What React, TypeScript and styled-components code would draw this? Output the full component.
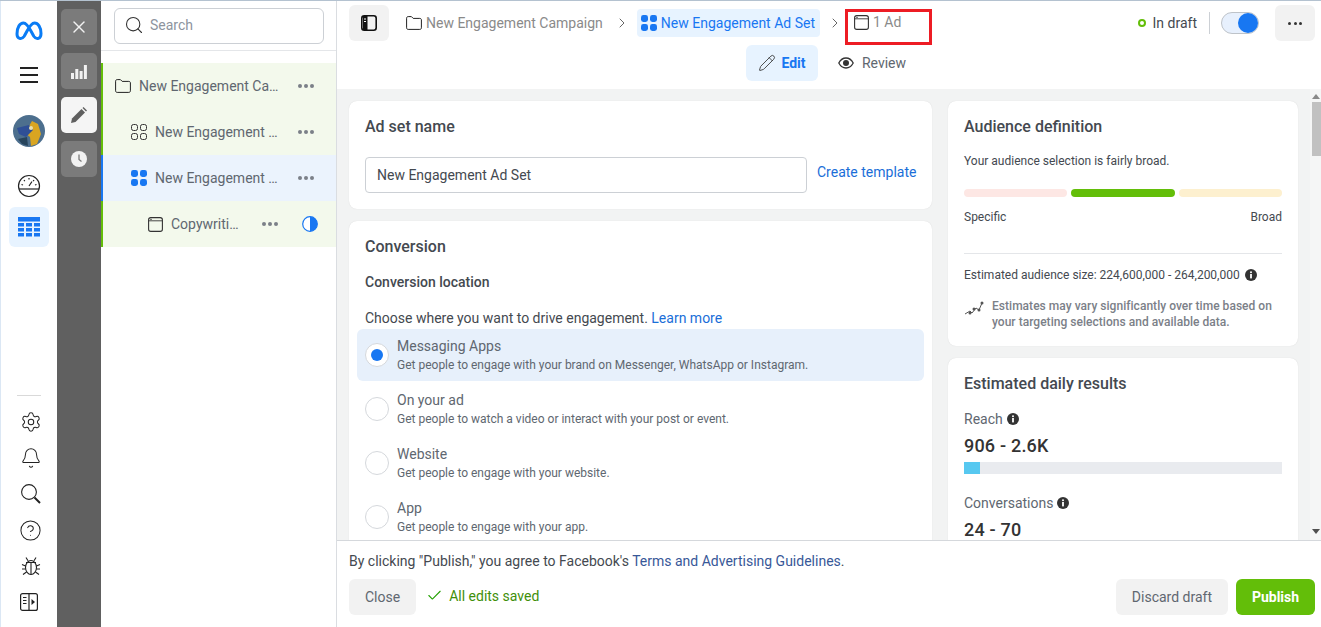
import React from 'react';
import styled, { createGlobalStyle } from 'styled-components';
import { Bell, Check, ChevronRight, CircleHelp, Pencil, Search, Settings, X } from 'lucide-react';

const GlobalStyle = createGlobalStyle`
	html, body, #root {
		height: 100%;
		margin: 0;
	}
	body {
		font-family: Roboto, "Liberation Sans", sans-serif;
		font-size: 14px;
		color: #444950;
		overflow: hidden;
		background: #fff;
	}
	* {
		box-sizing: border-box;
	}
`;

const GridIcon = ({ filled }: { filled?: boolean }) => (
	<svg width="16" height="16" viewBox="0 0 16 16">
		{[0, 9].map((y) =>
			[0, 9].map((x) =>
				filled ? (
					<rect key={`${x}-${y}`} x={x} y={y} width="7" height="7" rx="2.4" fill="#1877f2" />
				) : (
					<rect key={`${x}-${y}`} x={x + 0.5} y={y + 0.5} width="6" height="6" rx="2" fill="none" stroke="#333" />
				)
			)
		)}
	</svg>
);

const AdIcon = () => (
	<svg width="15" height="15" viewBox="0 0 15 15" fill="none">
		<rect x="0.6" y="0.6" width="13.8" height="13.8" rx="2.2" stroke="#333" strokeWidth="1.1" />
		<path d="M0.8 3.8H14.2" stroke="#333" strokeWidth="0.9" />
		<rect x="2.4" y="1.8" width="1.2" height="1.2" fill="#333" />
	</svg>
);

const FolderIcon = () => (
	<svg width="16" height="14" viewBox="0 0 16 14" fill="none">
		<path d="M0.6 2.2C0.6 1.2 1.2 0.6 2.2 0.6H5.4L7.2 2.4H13.8C14.8 2.4 15.4 3 15.4 4V11.8C15.4 12.8 14.8 13.4 13.8 13.4H2.2C1.2 13.4 0.6 12.8 0.6 11.8Z" stroke="#222" strokeWidth="1" />
	</svg>
);

const InfoIcon = () => (
	<svg width="12" height="12" viewBox="0 0 12 12">
		<circle cx="6" cy="6" r="6" fill="#333" />
		<rect x="5.1" y="5" width="1.8" height="4.4" fill="#fff" />
		<circle cx="6" cy="3.2" r="1" fill="#fff" />
	</svg>
);

const App: React.FC = () => {
	return (
		<Page>
			<GlobalStyle />
			<Rail>
				<svg width="28" height="20" viewBox="0 0 28 20" fill="none" style={{ marginTop: 20 }}>
					<path
						d="M2 13C2 6 5 2 8.500 2C13 2 16 11 19 15.500C21.500 19 26 18 26 12.500C26 6 23 2 19.500 2C15 2 12 11 9 15.500C6.500 19 2 18 2 13Z"
						stroke="#0a7cf5"
						strokeWidth="3"
					/>
				</svg>
				<Burger>
					<span />
					<span />
					<span />
				</Burger>
				<svg width="32" height="32" viewBox="0 0 32 32" style={{ marginTop: 32 }}>
					<circle cx="16" cy="16" r="16" fill="#4d6f8e" />
					<path d="M19 6L25 9L28 19L24 29L18 31L17 22L12 18Z" fill="#d9a521" />
					<path d="M4 13L16 10L20 15L13 22L6 19Z" fill="#2f4f96" />
					<path d="M5 24L14 22L15 31L9 29Z" fill="#27445c" />
					<circle cx="18" cy="13" r="2" fill="#e9dfb0" />
				</svg>
				<svg width="24" height="24" viewBox="0 0 24 24" fill="none" style={{ marginTop: 27 }}>
					<circle cx="12" cy="12" r="10.500" stroke="#222" strokeWidth="1.2" />
					<path d="M2 15H22" stroke="#222" strokeWidth="1.2" />
					<path d="M12 12L15 7.500" stroke="#222" strokeWidth="1.2" />
					<path d="M12 4V5.500M7 6L7.800 7.200M17 6L16.200 7.200M4.500 10.500L6 11M19.500 10.500L18 11" stroke="#222" strokeWidth="1.2" />
				</svg>
				<RailActive>
					<svg width="22" height="20" viewBox="0 0 22 20">
						<rect width="22" height="4.500" fill="#1877f2" />
						{[6, 11, 16].map((y) =>
							[0, 8, 16].map((x) => <rect key={`${x}-${y}`} x={x} y={y} width="6" height="3.500" fill="#1877f2" />)
						)}
					</svg>
				</RailActive>
				<RailSpacer />
				<RailRule />
				<RailIcon><Settings size={22} strokeWidth={1.1} /></RailIcon>
				<RailIcon><Bell size={22} strokeWidth={1.1} /></RailIcon>
				<RailIcon>
					<svg width="20" height="20" viewBox="0 0 20 20" fill="none">
						<circle cx="8" cy="8" r="7.400" stroke="#222" strokeWidth="1.100" />
						<path d="M13.500 13.500L19 19" stroke="#222" strokeWidth="2" />
					</svg>
				</RailIcon>
				<RailIcon><CircleHelp size={23} strokeWidth={1.05} /></RailIcon>
				<RailIcon>
					<svg width="20" height="20" viewBox="0 0 20 20" fill="none" stroke="#222" strokeWidth="1.100">
						<ellipse cx="10" cy="11.500" rx="5.500" ry="7" />
						<path d="M10 6V18.500M5 6.500H15" />
						<path d="M7 4.800L5 1.500M13 4.800L15 1.500M4.500 10L1 8.500M15.500 10L19 8.500M4.500 13H1M15.500 13H19M5.500 16L2 18.500M14.500 16L18 18.500" />
					</svg>
				</RailIcon>
				<RailIcon $flush>
					<svg width="18" height="18" viewBox="0 0 18 18" fill="none">
						<rect x="0.6" y="0.6" width="16.800" height="16.800" rx="2" stroke="#222" strokeWidth="1.2" />
						<path d="M9 1V17" stroke="#222" strokeWidth="1.2" />
						<path d="M3 4.500H6.500M3 7.500H6.500M3 10.500H6.500" stroke="#222" />
						<path d="M11.500 6L15 9L11.500 12Z" fill="#222" />
					</svg>
				</RailIcon>
			</Rail>
			<Strip>
				<StripButton><X size={20} color="#f2f2f2" strokeWidth={1.7} /></StripButton>
				<StripButton>
					<svg width="16" height="15" viewBox="0 0 16 15" fill="#f2f2f2">
						<rect y="9" width="3" height="6" />
						<rect x="4.300" y="5" width="3" height="10" />
						<rect x="8.600" y="7" width="3" height="8" />
						<rect x="12.900" y="1" width="3" height="14" />
					</svg>
				</StripButton>
				<StripButton $active>
					<svg width="16" height="16" viewBox="0 0 16 16" fill="#5f5f5f">
						<path d="M0 16L1 11.500L10.500 2L14 5.500L4.500 15Z" />
						<path d="M11.500 1L12.500 0L16 3.500L15 4.500Z" />
					</svg>
				</StripButton>
				<StripButton>
					<svg width="16" height="16" viewBox="0 0 16 16">
						<circle cx="8" cy="8" r="8" fill="#f2f2f2" />
						<path d="M8 3.500V8.500L10.500 10.500" stroke="#7a7a7a" strokeWidth="1.300" fill="none" />
					</svg>
				</StripButton>
			</Strip>
			<Tree>
				<TreeSearch>
					<SearchBox>
						<Search size={20} color="#333" strokeWidth={1.3} />
						<span>Search</span>
					</SearchBox>
				</TreeSearch>
				<TreeRows>
					<TreeRow $indent={14}>
						<FolderIcon />
						<TreeLabel>New Engagement Campaign</TreeLabel>
						<Dots />
					</TreeRow>
					<TreeRow $indent={30}>
						<GridIcon />
						<TreeLabel>New Engagement Ad Set</TreeLabel>
						<Dots />
					</TreeRow>
					<TreeRow $indent={30} $selected>
						<GridIcon filled />
						<TreeLabel>New Engagement Ad Set</TreeLabel>
						<Dots />
					</TreeRow>
					<TreeRow $indent={47}>
						<AdIcon />
						<TreeLabel $short>Copywriting Ad</TreeLabel>
						<Dots />
						<svg width="16" height="16" viewBox="0 0 16 16" style={{ marginLeft: 16, marginRight: -4 }}>
							<circle cx="8" cy="8" r="7.300" fill="#fff" stroke="#1877f2" strokeWidth="1.200" />
							<path d="M8 0.700A7.300 7.300 0 0 1 8 15.300Z" fill="#1877f2" />
						</svg>
					</TreeRow>
				</TreeRows>
			</Tree>
			<Main>
				<TopBar>
					<CrumbRow>
						<SquareButton>
							<svg width="16" height="16" viewBox="0 0 16 16" fill="none">
								<rect x="0.800" y="0.800" width="14.400" height="14.400" rx="2.500" stroke="#111" strokeWidth="1.600" />
								<path d="M2 1H6.500V15H2Z" fill="#111" />
								<path d="M3 4H5M3 6.500H5" stroke="#fff" />
							</svg>
						</SquareButton>
						<Crumb>
							<FolderIcon />
							New Engagement Campaign
						</Crumb>
						<ChevronRight size={16} color="#666" strokeWidth={1.5} />
						<CrumbActive>
							<GridIcon filled />
							New Engagement Ad Set
						</CrumbActive>
						<ChevronRight size={16} color="#666" strokeWidth={1.5} />
						<MarkedCrumb>
							<AdIcon />
							1 Ad
						</MarkedCrumb>
						<Status>
							<StatusDot />
							In draft
							<StatusRule />
							<Toggle><span /></Toggle>
							<SquareButton>
								<Dots $dark />
							</SquareButton>
						</Status>
					</CrumbRow>
					<Tabs>
						<EditTab>
							<Pencil size={18} strokeWidth={1.15} color="#333" />
							Edit
						</EditTab>
						<ReviewTab>
							<svg width="16" height="12" viewBox="0 0 16 12" fill="none">
								<path d="M0.800 6C2.500 2.800 5 1 8 1C11 1 13.500 2.800 15.200 6C13.500 9.200 11 11 8 11C5 11 2.500 9.200 0.800 6Z" stroke="#333" strokeWidth="1.300" />
								<circle cx="8" cy="6" r="3" fill="#333" />
							</svg>
							Review
						</ReviewTab>
					</Tabs>
				</TopBar>
				<Body>
					<Columns>
						<LeftColumn>
							<Card>
								<CardTitle>Ad set name</CardTitle>
								<NameRow>
									<NameInput>New Engagement Ad Set</NameInput>
									<CreateLink>Create template</CreateLink>
								</NameRow>
							</Card>
							<Card>
								<CardTitle>Conversion</CardTitle>
								<SubTitle>Conversion location</SubTitle>
								<Lead>
									Choose where you want to drive engagement. <BlueLink>Learn more</BlueLink>
								</Lead>
								{options.map((option, index) => (
									<Option key={option.title} $selected={index === 0}>
										<Radio $selected={index === 0} />
										<div>
											<OptionTitle>{option.title}</OptionTitle>
											<OptionText>{option.text}</OptionText>
										</div>
									</Option>
								))}
							</Card>
						</LeftColumn>
						<RightColumn>
							<Card>
								<CardTitle>Audience definition</CardTitle>
								<SmallText>Your audience selection is fairly broad.</SmallText>
								<Meter>
									<MeterPart $color="#fde7e4" />
									<MeterPart $color="#63be09" />
									<MeterPart $color="#fdf0cf" />
								</Meter>
								<MeterLabels>
									<span>Specific</span>
									<span>Broad</span>
								</MeterLabels>
								<Divider />
								<SizeLine>
									Estimated audience size: 224,600,000 - 264,200,000 <InfoIcon />
								</SizeLine>
								<Note>
									<svg width="20" height="16" viewBox="0 0 20 16" fill="none">
										<path d="M1 13L6 10L8 12L12 7L15 9L18 2" stroke="#555" strokeWidth="1" />
										<circle cx="6" cy="12" r="1.500" fill="#555" />
										<circle cx="10" cy="8" r="1.500" fill="#555" />
										<circle cx="15" cy="9" r="1.500" fill="#555" />
										<circle cx="18" cy="2" r="1.500" fill="#555" />
									</svg>
									<span>Estimates may vary significantly over time based on your targeting selections and available data.</span>
								</Note>
							</Card>
							<Card>
								<CardTitle>Estimated daily results</CardTitle>
								<ResultLabel>Reach <InfoIcon /></ResultLabel>
								<ResultValue>906 - 2.6K</ResultValue>
								<ResultBar><span style={{ width: '5%' }} /></ResultBar>
								<ResultLabel>Conversations <InfoIcon /></ResultLabel>
								<ResultValue>24 - 70</ResultValue>
								<ResultBar><span style={{ width: '5%' }} /></ResultBar>
							</Card>
						</RightColumn>
					</Columns>
					<Scrollbar>
						<ArrowUp />
						<Thumb />
						<ArrowDown />
					</Scrollbar>
				</Body>
				<Footer>
					<Terms>
						By clicking "Publish," you agree to Facebook's <TermsLink>Terms and Advertising Guidelines</TermsLink>.
					</Terms>
					<FooterRow>
						<GreyButton>Close</GreyButton>
						<Saved>
							<Check size={17} color="#22a000" strokeWidth={1.500} />
							All edits saved
						</Saved>
						<FooterSpacer />
						<GreyButton>Discard draft</GreyButton>
						<PublishButton>Publish</PublishButton>
					</FooterRow>
				</Footer>
			</Main>
		</Page>
	);
};

const options = [
	{ title: 'Messaging Apps', text: 'Get people to engage with your brand on Messenger, WhatsApp or Instagram.' },
	{ title: 'On your ad', text: 'Get people to watch a video or interact with your post or event.' },
	{ title: 'Website', text: 'Get people to engage with your website.' },
	{ title: 'App', text: 'Get people to engage with your app.' },
];

const Dots = ({ $dark }: { $dark?: boolean }) => (
	<DotsWrap $dark={$dark}>
		<i />
		<i />
		<i />
	</DotsWrap>
);

const DotsWrap = styled.span<{ $dark?: boolean }>`
	display: inline-flex;
	gap: ${(p) => (p.$dark ? '2.5px' : '2px')};
	flex-shrink: 0;
	i {
		width: ${(p) => (p.$dark ? '3px' : '4px')};
		height: ${(p) => (p.$dark ? '3px' : '4px')};
		border-radius: 50%;
		background: ${(p) => (p.$dark ? '#333' : '#7b8088')};
	}
`;

const Page = styled.div`
	display: flex;
	height: 100vh;
	overflow: hidden;
	border-top: 1px solid #b4c2d0;
`;

const Rail = styled.nav`
	width: 57px;
	flex-shrink: 0;
	display: flex;
	flex-direction: column;
	align-items: center;
	border-left: 1px solid #dbe7f4;
	padding-bottom: 7px;
`;

const Burger = styled.div`
	display: flex;
	flex-direction: column;
	gap: 5px;
	margin-top: 26px;
	span {
		width: 18px;
		height: 2px;
		background: #222;
	}
`;

const RailActive = styled.div`
	width: 40px;
	height: 40px;
	margin-top: 9px;
	border-radius: 6px;
	background: #e7f3ff;
	display: flex;
	align-items: center;
	justify-content: center;
`;

const RailSpacer = styled.div`
	flex: 1;
`;

const RailRule = styled.div`
	width: 24px;
	height: 1px;
	background: #d9d9d9;
	margin-bottom: 8px;
`;

const RailIcon = styled.div<{ $flush?: boolean }>`
	height: 36px;
	display: flex;
	align-items: center;
	justify-content: center;
	color: #222;
	margin-left: ${(p) => (p.$flush ? '0' : '3px')};
`;

const Strip = styled.div`
	width: 44px;
	flex-shrink: 0;
	background: #606060;
	display: flex;
	flex-direction: column;
	align-items: center;
	gap: 8px;
	padding-top: 8px;
`;

const StripButton = styled.div<{ $active?: boolean }>`
	width: 36px;
	height: 36px;
	border-radius: 5px;
	background: ${(p) => (p.$active ? '#f5f5f5' : '#7b7b7b')};
	display: flex;
	align-items: center;
	justify-content: center;
`;

const Tree = styled.aside`
	width: 236px;
	flex-shrink: 0;
	border-right: 1px solid #dadde1;
`;

const TreeSearch = styled.div`
	height: 50px;
	padding: 7px 12px 0 13px;
	border-bottom: 1px solid #e4e6e9;
`;

const SearchBox = styled.div`
	height: 36px;
	border: 1px solid #ccd0d5;
	border-radius: 6px;
	display: flex;
	align-items: center;
	gap: 6px;
	padding: 0 0 2px 9px;
	color: #8d949e;
`;

const TreeRows = styled.div`
	margin-top: 12px;
`;

const TreeRow = styled.div<{ $indent: number; $selected?: boolean }>`
	height: 46px;
	display: flex;
	align-items: center;
	gap: 8px;
	padding: 0 22px 0 ${(p) => p.$indent - 2}px;
	border-left: 2px solid ${(p) => (p.$selected ? '#1877f2' : '#63be09')};
	background: ${(p) => (p.$selected ? '#ebf3fd' : '#f3f9ec')};
`;

const TreeLabel = styled.span<{ $short?: boolean }>`
	flex: 1;
	min-width: 0;
	white-space: nowrap;
	overflow: hidden;
	text-overflow: ellipsis;
	color: #606770;
	margin-right: ${(p) => (p.$short ? '14px' : '9px')};
`;

const Main = styled.main`
	flex: 1;
	min-width: 0;
	display: flex;
	flex-direction: column;
`;

const TopBar = styled.header`
	height: 88px;
	flex-shrink: 0;
	padding: 4px 6px 0 12px;
`;

const CrumbRow = styled.div`
	display: flex;
	align-items: flex-start;
	height: 40px;
	color: #8a8a8a;
	> svg {
		margin: 10px 0 0;
		flex-shrink: 0;
	}
`;

const SquareButton = styled.div`
	width: 40px;
	height: 36px;
	border-radius: 6px;
	background: #f2f2f2;
	display: flex;
	align-items: center;
	justify-content: center;
	flex-shrink: 0;
`;

const Crumb = styled.div`
	display: flex;
	align-items: center;
	gap: 4px;
	height: 28px;
	margin: 4px 11px 0 17px;
`;

const CrumbActive = styled.div`
	display: flex;
	align-items: center;
	gap: 4px;
	height: 28px;
	margin: 4px 7px 0 7px;
	padding: 0 5px 0 4px;
	border-radius: 4px;
	background: #e7f3ff;
	color: #1877f2;
`;

const MarkedCrumb = styled.div`
	display: flex;
	align-items: flex-start;
	gap: 4px;
	width: 87px;
	height: 36px;
	margin: 4px 0 0 2px;
	padding: 3px 0 0 6px;
	border: 3px solid #ed1c24;
	line-height: 15px;
`;

const Status = styled.div`
	margin-left: auto;
	display: flex;
	align-items: center;
	height: 36px;
	color: #444950;
`;

const StatusDot = styled.span`
	width: 8px;
	height: 8px;
	border-radius: 50%;
	border: 2px solid #63be09;
	margin-right: 7px;
`;

const StatusRule = styled.span`
	width: 1px;
	height: 22px;
	background: #ccd0d5;
	margin: 0 11px 0 12px;
`;

const Toggle = styled.div`
	width: 38px;
	height: 22px;
	border-radius: 11px;
	border: 1px solid #bec3c9;
	background: #e7f0fd;
	display: flex;
	justify-content: flex-end;
	align-items: center;
	margin-right: 16px;
	span {
		width: 20px;
		height: 20px;
		border-radius: 50%;
		background: #1877f2;
	}
`;

const Tabs = styled.div`
	display: flex;
	justify-content: center;
	margin-right: 12px;
`;

const EditTab = styled.div`
	width: 72px;
	height: 36px;
	border-radius: 6px;
	background: #e7f3ff;
	color: #1877f2;
	font-weight: 700;
	display: flex;
	align-items: center;
	justify-content: center;
	gap: 5px;
	padding-bottom: 1px;
`;

const ReviewTab = styled.div`
	display: flex;
	align-items: center;
	gap: 8px;
	padding: 0 0 1px 20px;
	color: #606770;
`;

const Body = styled.div`
	flex: 1;
	min-height: 0;
	display: flex;
	justify-content: space-between;
	background: #f2f3f3;
	overflow: hidden;
`;

const Columns = styled.div`
	display: flex;
	gap: 16px;
	padding: 12px 0 0 12px;
	align-items: flex-start;
`;

const LeftColumn = styled.div`
	width: 583px;
	display: flex;
	flex-direction: column;
	gap: 12px;
`;

const RightColumn = styled.div`
	width: 350px;
	display: flex;
	flex-direction: column;
	gap: 12px;
`;

const Card = styled.section`
	background: #fff;
	border-radius: 8px;
	padding: 16px;
	box-shadow: 0 0 1px rgba(0, 0, 0, 0.15);
	flex-shrink: 0;
`;

const CardTitle = styled.h2`
	margin: 0;
	font-size: 16px;
	line-height: 19px;
	font-weight: 500;
	color: #444950;
`;

const NameRow = styled.div`
	display: flex;
	align-items: center;
	gap: 10px;
	margin-top: 21px;
`;

const NameInput = styled.div`
	width: 442px;
	height: 36px;
	border: 1px solid #ccd0d5;
	border-radius: 4px;
	padding: 0 0 1px 11px;
	display: flex;
	align-items: center;
	flex-shrink: 0;
	color: #444950;
`;

const BlueLink = styled.span`
	color: #1a6ed8;
	white-space: nowrap;
`;

const CreateLink = styled(BlueLink)`
	margin-bottom: 6px;
`;

const SubTitle = styled.div`
	margin-top: 18px;
	font-weight: 500;
	line-height: 16px;
`;

const Lead = styled.div`
	margin: 20px 0 3px;
	line-height: 16px;
`;

const Option = styled.div<{ $selected?: boolean }>`
	height: 52px;
	margin: 0 -8px 2px;
	padding: 8px 0 0 8px;
	border-radius: 6px;
	display: flex;
	align-items: flex-start;
	gap: 8px;
	background: ${(p) => (p.$selected ? '#e7f0fb' : 'transparent')};
`;

const Radio = styled.span<{ $selected?: boolean }>`
	width: 24px;
	height: 24px;
	margin-top: 6px;
	border-radius: 50%;
	border: 1px solid #d5d8dc;
	background: #fff;
	display: flex;
	align-items: center;
	justify-content: center;
	flex-shrink: 0;
	&::after {
		content: '';
		width: 12px;
		height: 12px;
		border-radius: 50%;
		background: ${(p) => (p.$selected ? '#1877f2' : 'transparent')};
	}
`;

const OptionTitle = styled.div`
	line-height: 19px;
	color: #606770;
`;

const OptionText = styled.div`
	font-size: 12px;
	line-height: 18px;
	color: #606770;
`;

const SmallText = styled.div`
	font-size: 12px;
	line-height: 14px;
	margin-top: 18px;
`;

const Meter = styled.div`
	display: flex;
	gap: 4px;
	margin-top: 21px;
`;

const MeterPart = styled.span<{ $color: string }>`
	flex: 1;
	height: 8px;
	border-radius: 4px;
	background: ${(p) => p.$color};
`;

const MeterLabels = styled.div`
	display: flex;
	justify-content: space-between;
	font-size: 12px;
	line-height: 14px;
	margin-top: 13px;
`;

const Divider = styled.div`
	height: 1px;
	background: #e4e6e9;
	margin-top: 29px;
`;

const SizeLine = styled.div`
	display: flex;
	align-items: center;
	gap: 2px;
	font-size: 12px;
	line-height: 14px;
	margin-top: 14px;
	white-space: pre-wrap;
`;

const Note = styled.div`
	display: flex;
	gap: 8px;
	margin-top: 16px;
	font-size: 12px;
	font-weight: 500;
	line-height: 16px;
	color: #7b8088;
	letter-spacing: 0.03px;
	svg {
		flex-shrink: 0;
		margin-top: 3px;
	}
`;

const ResultLabel = styled.div`
	display: flex;
	align-items: center;
	gap: 4px;
	line-height: 16px;
	margin-top: 18px;
	color: #606770;
`;

const ResultValue = styled.div`
	font-size: 18px;
	font-weight: 500;
	line-height: 21px;
	letter-spacing: 0.2px;
	margin-top: 8px;
	color: #333;
`;

const ResultBar = styled.div`
	height: 12px;
	margin: 6px 0 21px;
	background: #e9ebef;
	span {
		display: block;
		height: 100%;
		background: #57c8f0;
	}
`;

const Scrollbar = styled.div`
	width: 11px;
	display: flex;
	flex-direction: column;
	align-items: flex-end;
	background: #f5f6f6;
`;

const ArrowUp = styled.span`
	width: 0;
	height: 0;
	margin: 5px 1px 0 0;
	border: 4px solid transparent;
	border-top: 0;
	border-bottom: 5px solid #8a8a8a;
`;

const Thumb = styled.span`
	width: 9px;
	height: 54px;
	margin-top: 3px;
	background: #c1c1c1;
`;

const ArrowDown = styled.span`
	width: 0;
	height: 0;
	margin: auto 1px 6px 0;
	border: 4px solid transparent;
	border-bottom: 0;
	border-top: 5px solid #505050;
`;

const Footer = styled.footer`
	height: 87px;
	flex-shrink: 0;
	border-top: 1px solid #d5d8dc;
	background: #fff;
	padding: 12px 6px 0 12px;
`;

const Terms = styled.div`
	line-height: 16px;
	color: #444950;
`;

const TermsLink = styled.span`
	color: #385898;
`;

const FooterRow = styled.div`
	display: flex;
	align-items: center;
	gap: 8px;
	margin-top: 10px;
`;

const FooterSpacer = styled.div`
	flex: 1;
`;

const GreyButton = styled.div`
	height: 36px;
	padding: 0 16px;
	border-radius: 6px;
	background: #f2f2f2;
	display: flex;
	align-items: center;
	color: #606770;
`;

const PublishButton = styled.div`
	height: 36px;
	width: 79px;
	border-radius: 6px;
	background: #63be09;
	color: #fff;
	font-weight: 700;
	display: flex;
	align-items: center;
	justify-content: center;
`;

const Saved = styled.div`
	display: flex;
	align-items: center;
	gap: 6px;
	margin-left: 2px;
	padding-bottom: 3px;
	color: #3f8f0a;
`;

export default App;
